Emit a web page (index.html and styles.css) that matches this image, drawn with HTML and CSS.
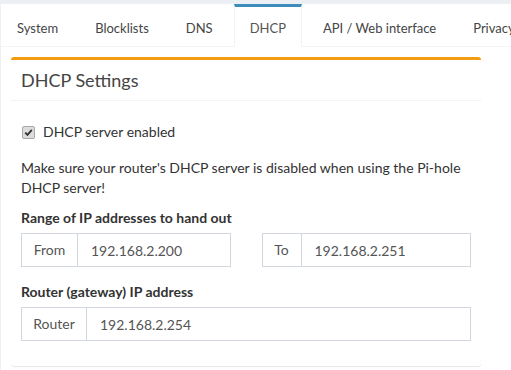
FILE: index.html
```html
<!DOCTYPE html>
<html lang="en">
<head>
    <meta charset="UTF-8">
    <meta name="viewport" content="width=device-width, initial-scale=1.0">
    <title>Pi-hole Settings - DHCP</title>
    <link rel="stylesheet" href="styles.css">
</head>
<body>
    <div class="tabs-custom">
        <ul class="nav-tabs">
            <li><a href="#">System</a></li>
            <li><a href="#">Blocklists</a></li>
            <li><a href="#">DNS</a></li>
            <li class="active"><a href="#">DHCP</a></li>
            <li><a href="#">API / Web interface</a></li>
            <li><a href="#">Privacy</a></li>
        </ul>

        <div class="tab-content">
            <div class="box box-warning">
                <div class="box-header">
                    <h3 class="box-title">DHCP Settings</h3>
                </div>
                <div class="box-body">
                    <div class="checkbox">
                        <label>
                            <span class="check-box">
                                <svg width="9" height="9" viewBox="0 0 9 9"><path d="M1.2 4.6 L3.5 6.9 L7.8 1.8" fill="none" stroke="#333" stroke-width="1.8"/></svg>
                            </span>
                            DHCP server enabled
                        </label>
                    </div>
                    <p>Make sure your router's DHCP server is disabled when using the Pi-hole DHCP server!</p>

                    <div class="form-group">
                        <label class="field-label">Range of IP addresses to hand out</label>
                        <div class="range-row">
                            <div class="input-group">
                                <span class="addon addon-from">From</span>
                                <input type="text" class="form-control" value="192.168.2.200">
                            </div>
                            <div class="input-group">
                                <span class="addon addon-to">To</span>
                                <input type="text" class="form-control" value="192.168.2.251">
                            </div>
                        </div>
                    </div>

                    <div class="form-group">
                        <label class="field-label">Router (gateway) IP address</label>
                        <div class="input-group">
                            <span class="addon addon-router">Router</span>
                            <input type="text" class="form-control" value="192.168.2.254">
                        </div>
                    </div>
                </div>
            </div>
        </div>
    </div>
</body>
</html>
```

FILE: styles.css
```css
body {
    margin: 0;
    font-family: Lato, "Open Sans", sans-serif;
    font-size: 14px;
    line-height: 20px;
    color: #333;
    background-color: #ecf0f5;
    overflow: hidden;
}
.tabs-custom {
    margin-top: 4px;
    background-color: white;
    border-left: 1px solid #f0f0f0;
    height: 366px;
}
.nav-tabs {
    display: flex;
    margin: 0;
    padding: 0;
    list-style: none;
    border-bottom: 1px solid #f4f4f4;
    white-space: nowrap;
}
.nav-tabs li {
    margin-right: 5px;
    border-top: 3px solid transparent;
    border-left: 1px solid transparent;
    border-right: 1px solid transparent;
    margin-bottom: -1px;
}
.nav-tabs li a {
    display: block;
    padding: 11px 15px 9px 15px;
    font-size: 13px;
    color: #444;
    text-decoration: none;
}
.nav-tabs li.active {
    border-top-color: #3c8dbc;
    border-left-color: #f4f4f4;
    border-right-color: #f4f4f4;
    background-color: white;
}
.nav-tabs li.active a {
    color: #555;
}
.tab-content {
    padding: 10px 10px;
}
.box {
    width: 470px;
    background-color: white;
    border-top: 3px solid #f39c12;
    border-radius: 3px;
    box-shadow: 0 1px 1px rgba(0,0,0,0.1);
}
.box-header {
    padding: 10px;
    border-bottom: 1px solid #f4f4f4;
}
.box-title {
    margin: 0;
    font-size: 18px;
    font-weight: normal;
    line-height: 20px;
    color: #444;
}
.box-body {
    padding: 10px;
}
.checkbox {
    margin: 11px 0 16px;
}
.checkbox label {
    display: flex;
    align-items: center;
    gap: 8px;
}
.check-box {
    display: inline-flex;
    align-items: center;
    justify-content: center;
    width: 11px;
    height: 11px;
    margin-left: 1px;
    border: 1px solid #a8a8a8;
    border-radius: 2px;
    background-color: #dcdcdc;
}
p {
    margin: 0 0 10px;
}
.form-group {
    margin-bottom: 15px;
}
.field-label {
    display: block;
    margin-bottom: 5px;
    font-weight: bold;
    color: #333;
    line-height: 20px;
}
.range-row {
    display: grid;
    grid-template-columns: minmax(0, 1fr) minmax(0, 1fr);
    gap: 31px;
}
.input-group {
    display: flex;
    height: 34px;
}
.addon {
    flex: none;
    box-sizing: border-box;
    display: flex;
    align-items: center;
    justify-content: center;
    border: 1px solid #d2d6de;
    color: #555;
    background-color: white;
}
.addon-from {
    width: 57px;
}
.addon-to {
    width: 40px;
}
.addon-router {
    width: 66px;
}
.form-control {
    flex: 1;
    width: 0;
    min-width: 0;
    padding: 6px 13px;
    border: 1px solid #d2d6de;
    border-left: none;
    font-family: inherit;
    font-size: 14px;
    color: #555;
    background-color: white;
    outline: none;
}
```
